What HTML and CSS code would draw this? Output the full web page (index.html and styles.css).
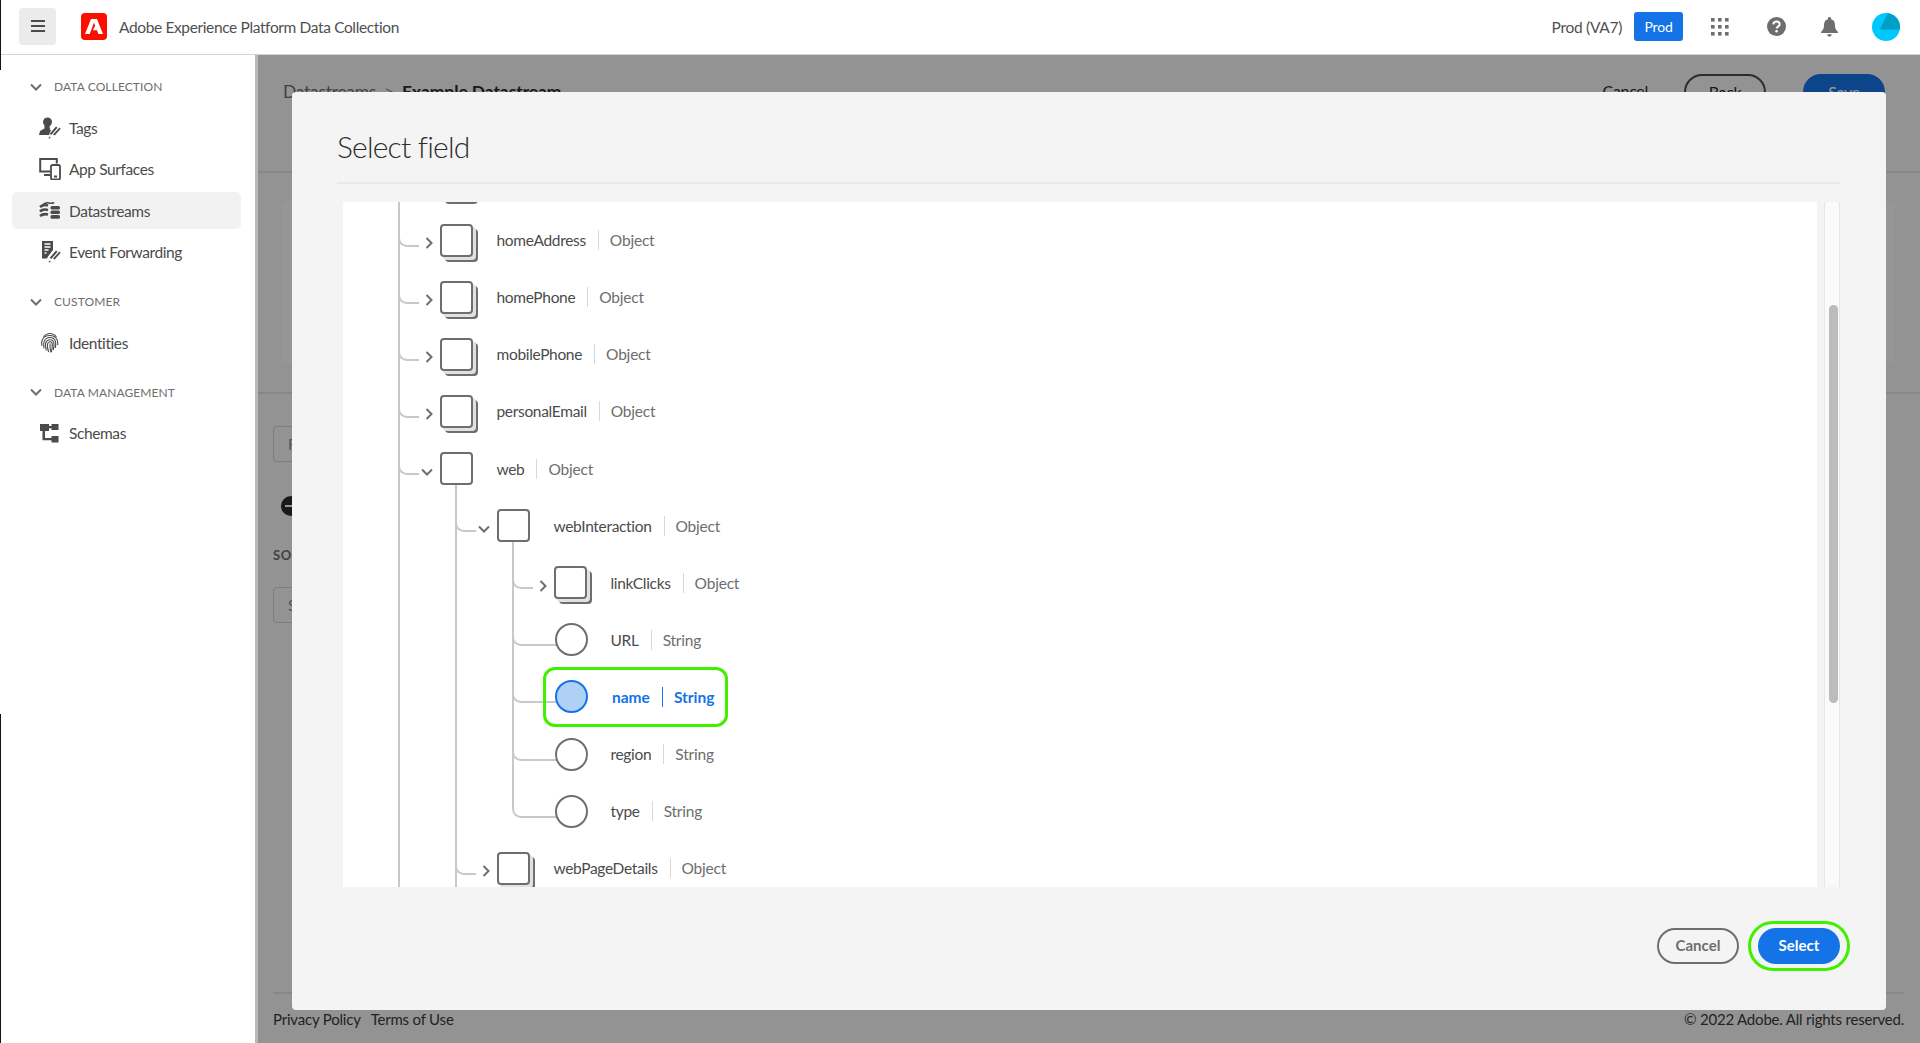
FILE: index.html
```html
<!DOCTYPE html>
<html lang="en">

<head>
    <meta charset="UTF-8">
    <title>Adobe Experience Platform Data Collection</title>
    <link rel="stylesheet" href="styles.css">
</head>

<body>
    <header class="topbar">
        <button class="menu-button" aria-label="Menu">
            <svg width="14" height="12" viewBox="0 0 14 12"><path d="M0 1h14M0 6h14M0 11h14" stroke="#4b4b4b" stroke-width="2"/></svg>
        </button>
        <svg class="logo" width="26" height="27" viewBox="0 0 26 27">
            <rect width="26" height="27" rx="4" fill="#fa0f00"/>
            <path d="M10 6h6l6 15h-4.600l-1.400-3.800h-4.200l2.300-4.200 1 2.800h-.1L13 9.500 8.700 21H4z" fill="#fff"/>
        </svg>
        <span class="product">Adobe Experience Platform Data Collection</span>
        <div class="topbar-right">
            <span class="org">Prod (VA7)</span>
            <span class="env">Prod</span>
            <svg class="top-icon grid-icon" width="18" height="18" viewBox="0 0 18 18" fill="#6e6e6e">
                <rect width="3.600" height="3.600"/><rect x="7" width="3.600" height="3.600"/><rect x="14" width="3.600" height="3.600"/>
                <rect y="7" width="3.600" height="3.600"/><rect x="7" y="7" width="3.600" height="3.600"/><rect x="14" y="7" width="3.600" height="3.600"/>
                <rect y="14" width="3.600" height="3.600"/><rect x="7" y="14" width="3.600" height="3.600"/><rect x="14" y="14" width="3.600" height="3.600"/>
            </svg>
            <svg class="top-icon help-icon" width="19" height="19" viewBox="0 0 19 19">
                <circle cx="9.500" cy="9.500" r="9.500" fill="#6e6e6e"/>
                <path d="M6.300 7.300c.2-1.800 1.500-2.700 3.200-2.700 1.900 0 3.200 1.100 3.200 2.700 0 2.300-3.100 2.400-3.100 4.200" fill="none" stroke="#fff" stroke-width="2"/>
                <circle cx="9.600" cy="14.300" r="1.300" fill="#fff"/>
            </svg>
            <svg class="top-icon bell-icon" width="17" height="20" viewBox="0 0 17 20" fill="#6e6e6e">
                <path d="M8.500 0c1 0 1.600.7 1.600 1.600v.6c2.700.7 3.900 2.800 3.900 5.800 0 3.300.8 5 3 7v1H0v-1c2.200-2 3-3.700 3-7 0-3 1.200-5.100 3.900-5.800v-.6C6.900.7 7.500 0 8.500 0z"/>
                <path d="M6.300 17.200h4.400c0 1.400-1 2.400-2.200 2.400s-2.200-1-2.200-2.400z"/>
            </svg>
            <svg class="avatar" width="28" height="28" viewBox="0 0 28 28">
                <circle cx="14" cy="14" r="14" fill="#00c8ff"/>
                <path d="M15.500.2 8 16.500h20V14C28 6.800 22.500 1 15.500.2z" fill="#00a0c6"/>
            </svg>
        </div>
    </header>

    <div class="layout">
        <nav class="sidebar">
            <div class="nav-heading">
                <svg width="12" height="8" viewBox="0 0 12 8"><path d="M1 1.500l5 5 5-5" fill="none" stroke="#6e6e6e" stroke-width="2"/></svg>
                DATA COLLECTION
            </div>
            <a class="nav-item">
                <svg width="22" height="22" viewBox="0 0 22 22" fill="#4b4b4b">
                    <circle cx="8.500" cy="5" r="4.500"/>
                    <path d="M5.500 8.500v3L1 14 0 18h10l.5-1.500 1.500-3.500-1-.5-.5-3.500z"/>
                    <path d="M10.500 17l6.500-7.500 1.500 1.300-6 7zM14 17.500l6.500-7 1.200 1.200-6 6.800zM9.500 21l1.500-1.500.7.700-1.500 1.500z"/>
                </svg>
                Tags
            </a>
            <a class="nav-item">
                <svg width="22" height="22" viewBox="0 0 22 22">
                    <path d="M11 13.500H1.200V1h16.600v4.500" fill="none" stroke="#4b4b4b" stroke-width="2"/>
                    <path d="M5 17h6" stroke="#4b4b4b" stroke-width="2"/>
                    <rect x="12" y="7" width="9" height="14.500" rx="1.500" fill="none" stroke="#4b4b4b" stroke-width="1.800"/>
                    <path d="M15 18.500h3" stroke="#4b4b4b" stroke-width="2"/>
                </svg>
                App Surfaces
            </a>
            <a class="nav-item active">
                <svg width="22" height="22" viewBox="0 0 22 22">
                    <path d="M1 7c3-2.500 5-2.500 8-1.500M1 11.500c2-2 4.500-2.500 8-1.500M1 16c2.500-2 4.500-2.500 8-1.500" fill="none" stroke="#4b4b4b" stroke-width="2.600"/>
                    <path d="M3 6c2-3 5-3.500 7-3 2 .5 3.500.5 5-.5" fill="none" stroke="#4b4b4b" stroke-width="1.600"/>
                    <rect x="11.500" y="6" width="9.500" height="3.400" rx="1.500" fill="#4b4b4b"/>
                    <rect x="11.500" y="10.500" width="9.500" height="3.400" rx="1.500" fill="#4b4b4b"/>
                    <rect x="11.500" y="15" width="9.500" height="3.800" rx="1.500" fill="#4b4b4b"/>
                </svg>
                Datastreams
            </a>
            <a class="nav-item">
                <svg width="22" height="22" viewBox="0 0 22 22" fill="#4b4b4b">
                    <path d="M3 0h11v9l-5 6.500-1 2H3z"/>
                    <path d="M5.500 3h6M5.500 6h6M5.500 9h4M5.500 12h2" stroke="#fff" stroke-width="1.300"/>
                    <path d="M10.500 17l6.500-7.500 1.500 1.300-6 7zM14 17.500l6.500-7 1.200 1.200-6 6.800zM9.500 21l1.500-1.500.7.700-1.500 1.500z"/>
                </svg>
                Event Forwarding
            </a>
            <div class="nav-heading">
                <svg width="12" height="8" viewBox="0 0 12 8"><path d="M1 1.500l5 5 5-5" fill="none" stroke="#6e6e6e" stroke-width="2"/></svg>
                CUSTOMER
            </div>
            <a class="nav-item">
                <svg width="22" height="22" viewBox="0 0 22 22" fill="none" stroke="#4b4b4b" stroke-width="1.100">
                    <path d="M4.500 5C6 3 8 1.500 11 1.500S16 3 17.500 5"/>
                    <path d="M3 14c-.6-2-.6-4 .2-6 1.300-3 4.300-4.500 7.800-4.500 3.200 0 5.800 1.600 7 4 .8 1.700 1 3.500.7 5.500"/>
                    <path d="M5 16.500C4.300 13.500 4.400 11 5.300 9c1.200-2.500 3.200-3.500 5.700-3.500 3 0 4.800 1.600 5.500 4 .4 1.800.3 4-.2 6.500"/>
                    <path d="M7.300 18.500c-1-3-1.200-5.500-.6-7.500.7-2 2.300-3.300 4.300-3.300 2.300 0 3.600 1.400 3.900 3.500.2 2 0 4.200-.6 6.800"/>
                    <path d="M9.600 20c-1-3-1.600-5.500-1.100-8 .3-1.300 1.200-2.300 2.500-2.300 1.500 0 2.200 1 2.300 2.500.1 2.500-.2 5-1 7.800"/>
                    <path d="M11 11.500c-.2 3 .2 6 1 9"/>
                </svg>
                Identities
            </a>
            <div class="nav-heading">
                <svg width="12" height="8" viewBox="0 0 12 8"><path d="M1 1.500l5 5 5-5" fill="none" stroke="#6e6e6e" stroke-width="2"/></svg>
                DATA MANAGEMENT
            </div>
            <a class="nav-item">
                <svg width="22" height="22" viewBox="0 0 22 22" fill="#4b4b4b">
                    <rect x="1" y="2" width="9" height="7"/>
                    <rect x="12.500" y="2" width="7" height="6"/>
                    <rect x="12.500" y="14" width="7" height="6.500"/>
                    <path d="M9 4h4v2.200H9zM3.500 8h2.500v8h7v2.200H3.500z"/>
                </svg>
                Schemas
            </a>
        </nav>

        <main class="page">
            <!-- page behind the dialog -->
            <div class="page-head">
                <span class="crumb">Datastreams</span>
                <span class="crumb-sep">&gt;</span>
                <span class="crumb-current">Example Datastream</span>
                <div class="page-actions">
                    <span class="page-cancel">Cancel</span>
                    <span class="page-back">Back</span>
                    <span class="page-save">Save</span>
                </div>
            </div>
            <div class="page-card"></div>
            <div class="page-body">
                <div class="fake-input">Filter</div>
                <div class="add-circle"></div>
                <div class="fake-label">SOURCE</div>
                <div class="fake-input">Select</div>
            </div>
            <div class="page-footer">
                <span><a>Privacy Policy</a><a>Terms of Use</a></span>
                <span>&copy; 2022 Adobe. All rights reserved.</span>
            </div>

            <div class="scrim"></div>

            <section class="dialog">
                <h2>Select field</h2>
                <div class="dialog-body">
                    <div class="tree-panel">
                        <ul class="tree">
                            <li>
                                <div class="row"><span class="toggle"></span><span class="node stacked"></span></div>
                            </li>
                            <li>
                                <div class="row"><span class="toggle"><svg width="9" height="12" viewBox="0 0 9 12"><path d="M1.500 1l5 5-5 5" fill="none" stroke="#6e6e6e" stroke-width="2"/></svg></span><span class="node stacked"></span><span class="name">homeAddress</span><span class="type">Object</span></div>
                            </li>
                            <li>
                                <div class="row"><span class="toggle"><svg width="9" height="12" viewBox="0 0 9 12"><path d="M1.500 1l5 5-5 5" fill="none" stroke="#6e6e6e" stroke-width="2"/></svg></span><span class="node stacked"></span><span class="name">homePhone</span><span class="type">Object</span></div>
                            </li>
                            <li>
                                <div class="row"><span class="toggle"><svg width="9" height="12" viewBox="0 0 9 12"><path d="M1.500 1l5 5-5 5" fill="none" stroke="#6e6e6e" stroke-width="2"/></svg></span><span class="node stacked"></span><span class="name">mobilePhone</span><span class="type">Object</span></div>
                            </li>
                            <li>
                                <div class="row"><span class="toggle"><svg width="9" height="12" viewBox="0 0 9 12"><path d="M1.500 1l5 5-5 5" fill="none" stroke="#6e6e6e" stroke-width="2"/></svg></span><span class="node stacked"></span><span class="name">personalEmail</span><span class="type">Object</span></div>
                            </li>
                            <li>
                                <div class="row"><span class="toggle open"><svg width="12" height="8" viewBox="0 0 12 8"><path d="M1 1.500l5 5 5-5" fill="none" stroke="#6e6e6e" stroke-width="2"/></svg></span><span class="node"></span><span class="name">web</span><span class="type">Object</span></div>
                                <ul>
                                    <li>
                                        <div class="row"><span class="toggle open"><svg width="12" height="8" viewBox="0 0 12 8"><path d="M1 1.500l5 5 5-5" fill="none" stroke="#6e6e6e" stroke-width="2"/></svg></span><span class="node"></span><span class="name">webInteraction</span><span class="type">Object</span></div>
                                        <ul>
                                            <li>
                                                <div class="row"><span class="toggle"><svg width="9" height="12" viewBox="0 0 9 12"><path d="M1.500 1l5 5-5 5" fill="none" stroke="#6e6e6e" stroke-width="2"/></svg></span><span class="node stacked"></span><span class="name">linkClicks</span><span class="type">Object</span></div>
                                            </li>
                                            <li class="leaf">
                                                <div class="row"><span class="toggle"></span><span class="node round"></span><span class="name">URL</span><span class="type">String</span></div>
                                            </li>
                                            <li class="leaf">
                                                <div class="row selected"><span class="toggle"></span><span class="node round"></span><span class="name">name</span><span class="type">String</span></div>
                                            </li>
                                            <li class="leaf">
                                                <div class="row"><span class="toggle"></span><span class="node round"></span><span class="name">region</span><span class="type">String</span></div>
                                            </li>
                                            <li class="leaf">
                                                <div class="row"><span class="toggle"></span><span class="node round"></span><span class="name">type</span><span class="type">String</span></div>
                                            </li>
                                        </ul>
                                    </li>
                                    <li>
                                        <div class="row"><span class="toggle"><svg width="9" height="12" viewBox="0 0 9 12"><path d="M1.500 1l5 5-5 5" fill="none" stroke="#6e6e6e" stroke-width="2"/></svg></span><span class="node stacked"></span><span class="name">webPageDetails</span><span class="type">Object</span></div>
                                    </li>
                                    <li>
                                        <div class="row"><span class="toggle"></span><span class="node stacked"></span></div>
                                    </li>
                                </ul>
                            </li>
                            <li>
                                <div class="row"><span class="toggle"></span><span class="node stacked"></span></div>
                            </li>
                        </ul>
                    </div>
                    <div class="scroll-track"><div class="scroll-thumb"></div></div>
                </div>
                <div class="dialog-footer">
                    <button class="btn-cancel">Cancel</button>
                    <button class="btn-select">Select</button>
                </div>
            </section>
        </main>
    </div>
</body>

</html>
```

FILE: styles.css
```css
* {
    box-sizing: border-box;
}

html,
body {
    height: 100%;
}

body {
    margin: 0;
    font-family: Lato, "Open Sans", sans-serif;
    font-size: 15.5px;
    letter-spacing: -0.2px;
    color: #4b4b4b;
    background-color: #fff;
    overflow: hidden;
    display: flex;
    flex-direction: column;
    position: relative;
}

/* thin black edge left of the window */
body::before,
body::after {
    content: "";
    position: absolute;
    left: 0;
    width: 1px;
    background-color: #111;
    z-index: 5;
}

body::before {
    top: 0;
    height: 70px;
}

body::after {
    top: 714px;
    bottom: 0;
}

ul {
    list-style: none;
    margin: 0;
    padding: 0;
}

/* Top bar */
.topbar {
    height: 55px;
    flex: none;
    display: flex;
    align-items: center;
    padding: 0 0 1px 19px;
    border-bottom: 1px solid #d4d4d4;
}

.menu-button {
    width: 37px;
    height: 37px;
    margin-bottom: 1px;
    border: 0;
    border-radius: 4px;
    background-color: #ebebeb;
    display: flex;
    align-items: center;
    justify-content: center;
    padding: 0;
}

.logo {
    margin-left: 25px;
}

.product {
    margin-left: 12px;
    font-size: 15.5px;
    letter-spacing: -0.37px;
    color: #505050;
}

.topbar-right {
    margin-left: auto;
    display: flex;
    align-items: center;
    padding-right: 20px;
}

.org {
    font-size: 15.5px;
    letter-spacing: -0.3px;
    color: #505050;
}

.env {
    margin-left: 12px;
    width: 49px;
    height: 29px;
    line-height: 29px;
    text-align: center;
    border-radius: 3px;
    background-color: #1473e6;
    color: #fff;
    font-size: 14px;
}

.grid-icon {
    margin-left: 28px;
}

.help-icon {
    margin-left: 38px;
}

.bell-icon {
    margin-left: 35px;
}

.avatar {
    margin-left: 34px;
}

.layout {
    flex: 1;
    display: flex;
    min-height: 0;
}

/* Sidebar */
.sidebar {
    width: 255px;
    flex: none;
    padding: 9px 14px 0 12px;
}

.nav-heading {
    height: 45px;
    display: flex;
    align-items: center;
    gap: 12px;
    padding-left: 18px;
    font-size: 12px;
    letter-spacing: 0.1px;
    color: #6e6e6e;
}

.nav-heading:not(:first-child) {
    margin-top: 8.500px;
}

.nav-item {
    height: 37px;
    margin-bottom: 4.500px;
    display: flex;
    align-items: center;
    gap: 8px;
    padding-left: 27px;
    border-radius: 5px;
    letter-spacing: -0.4px;
    color: #4b4b4b;
}

.nav-item.active {
    background-color: #f2f2f2;
}

/* Page behind the dialog */
.page {
    flex: 1;
    min-width: 0;
    position: relative;
    display: flex;
    flex-direction: column;
    background-color: #f5f5f5;
    color: #2c2c2c;
    overflow: hidden;
}

.page-head {
    height: 118px;
    flex: none;
    display: flex;
    align-items: flex-start;
    padding: 19px 35px 0 28px;
    border-bottom: 2px solid #e1e1e1;
    font-size: 17.5px;
    letter-spacing: -0.3px;
}

.crumb {
    margin-top: 7px;
    color: #6e6e6e;
}

.crumb-sep {
    margin: 7px 8px 0;
    color: #8e8e8e;
}

.crumb-current {
    margin-top: 7px;
    font-weight: 700;
    letter-spacing: -0.1px;
}

.page-actions {
    margin-left: auto;
    display: flex;
    align-items: flex-start;
    font-size: 16px;
}

.page-cancel {
    margin: 7px 36px 0 0;
}

.page-back,
.page-save {
    width: 82px;
    height: 36px;
    line-height: 32px;
    text-align: center;
    border: 2px solid #4b4b4b;
    border-radius: 18px;
}

.page-save {
    margin-left: 37px;
    border-color: #1473e6;
    background-color: #1473e6;
    color: #fff;
}

.page-card {
    height: 161px;
    flex: none;
    margin: 29px 25px 0 28px;
    background-color: #fafafa;
}

.page-body {
    flex: 1;
    padding: 0 18px;
    margin-top: 29px;
    border-top: 2px solid #e1e1e1;
}

.fake-input {
    width: 300px;
    height: 36px;
    line-height: 34px;
    margin-top: 32px;
    padding-left: 14px;
    border: 1px solid #d0d0d0;
    border-radius: 4px;
    color: #8e8e8e;
}

.fake-label + .fake-input {
    margin-top: 24px;
}

.add-circle {
    width: 20px;
    height: 20px;
    margin: 34px 0 0 8px;
    border-radius: 50%;
    background: linear-gradient(#f5f5f5, #f5f5f5) center / 12px 2px no-repeat, #2c2c2c;
}

.fake-label {
    margin-top: 31px;
    font-size: 13px;
    font-weight: 700;
    letter-spacing: 0.6px;
    color: #6e6e6e;
}

.page-footer {
    height: 51px;
    flex: none;
    margin: 0 16px 0 18px;
    padding-top: 16px;
    display: flex;
    justify-content: space-between;
    border-top: 2px solid #e1e1e1;
    font-size: 15px;
    color: #3a3a3a;
}

.page-footer a {
    margin-right: 10px;
}

.scrim {
    position: absolute;
    inset: 0;
    border-left: 3px solid #b8b8b8;
    background-color: rgba(0, 0, 0, 0.4);
}

/* Dialog */
.dialog {
    position: absolute;
    left: 37px;
    top: 37px;
    right: 34px;
    bottom: 33px;
    display: flex;
    flex-direction: column;
    background-color: #f4f4f4;
    border-radius: 4px;
}

.dialog h2 {
    flex: none;
    height: 92px;
    margin: 0 46px 18px 45px;
    padding-top: 34px;
    border-bottom: 2px solid #e9e9e9;
    font-size: 30px;
    font-weight: 300;
    line-height: 40px;
    letter-spacing: -0.8px;
    color: #2c2c2c;
}

.dialog-body {
    flex: 1;
    min-height: 0;
    display: flex;
    gap: 7px;
    margin: 0 46px 0 51px;
}

.tree-panel {
    flex: 1;
    background-color: #fff;
    overflow: hidden;
}

.tree {
    margin-top: -47.600px;
    padding-left: 55px;
}

.tree ul {
    margin-left: 57px;
    position: relative;
}

/* stem from an open node down to its children */
.tree ul::before {
    content: "";
    position: absolute;
    left: 0;
    top: -12px;
    width: 2px;
    height: 12px;
    background-color: #c8c8c8;
}

.tree li {
    position: relative;
}

/* vertical line to the next sibling */
.tree li:not(:last-child)::after {
    content: "";
    position: absolute;
    left: 0;
    top: 0;
    bottom: 0;
    width: 2px;
    background-color: #c8c8c8;
}

/* elbow into the row */
.tree li::before {
    content: "";
    position: absolute;
    left: 0;
    top: 0;
    width: 19px;
    height: 33px;
    border-left: 2px solid #c8c8c8;
    border-bottom: 2px solid #c8c8c8;
    border-bottom-left-radius: 9px;
}

.tree li.leaf::before {
    width: 43px;
}

.row {
    height: 57.120px;
    width: fit-content;
    display: flex;
    align-items: center;
    position: relative;
    padding-left: 21px;
    white-space: nowrap;
}

.toggle {
    width: 21px;
    flex: none;
    display: flex;
    justify-content: center;
    padding-top: 6px;
}

.toggle.open {
    padding-right: 6px;
}

.toggle svg {
    display: block;
}

.node {
    width: 33px;
    height: 33px;
    flex: none;
    border: 2px solid #6e6e6e;
    border-radius: 4px;
    background-color: #fff;
    position: relative;
    z-index: 1;
}

.node.stacked {
    box-shadow: 3px 3px 0 0 #e1e1e1, 5px 5px 0 0 #6e6e6e;
}

.node.round {
    border-radius: 50%;
    margin-left: 1px;
    margin-right: -1px;
}

.name {
    margin-left: 23.500px;
    letter-spacing: -0.32px;
    color: #4b4b4b;
}

.type {
    margin-left: 12px;
    padding-left: 11px;
    border-left: 1.500px solid #d8d8d8;
    line-height: 20px;
    color: #6e6e6e;
}

.row.selected .node {
    border-color: #1473e6;
    background-color: #b0d1f6;
}

.row.selected .name,
.row.selected .type {
    color: #1473e6;
    font-weight: 700;
    letter-spacing: 0;
    border-color: #1473e6;
}

.row.selected .name {
    margin-left: 25px;
}

.row.selected::after {
    content: "";
    position: absolute;
    left: 31px;
    right: -14px;
    top: -1.500px;
    bottom: -1.500px;
    border: 3px solid #3ff000;
    border-radius: 12px;
    z-index: 2;
}

.scroll-track {
    width: 16px;
    flex: none;
    position: relative;
    background-color: #fafafa;
    border-left: 1px solid #e6e6e6;
    border-right: 1px solid #e6e6e6;
}

.scroll-thumb {
    position: absolute;
    left: 4px;
    top: 103px;
    width: 9px;
    height: 398px;
    border-radius: 5px;
    background-color: #bcbcbc;
}

.dialog-footer {
    height: 123px;
    flex: none;
    display: flex;
    justify-content: flex-end;
    align-items: flex-start;
    gap: 19px;
    padding: 41px 46px 0 0;
}

.dialog-footer button {
    width: 82px;
    height: 36px;
    border-radius: 18px;
    font-family: inherit;
    font-size: 15px;
    font-weight: 700;
    padding: 0 0 2px;
}

.btn-cancel {
    border: 2px solid #6e6e6e;
    background-color: transparent;
    color: #6e6e6e;
}

.btn-select {
    border: 0;
    background-color: #1473e6;
    color: #fff;
    position: relative;
}

.btn-select::after {
    content: "";
    position: absolute;
    inset: -7px -10px;
    border: 3px solid #3ff000;
    border-radius: 25px;
}
```
